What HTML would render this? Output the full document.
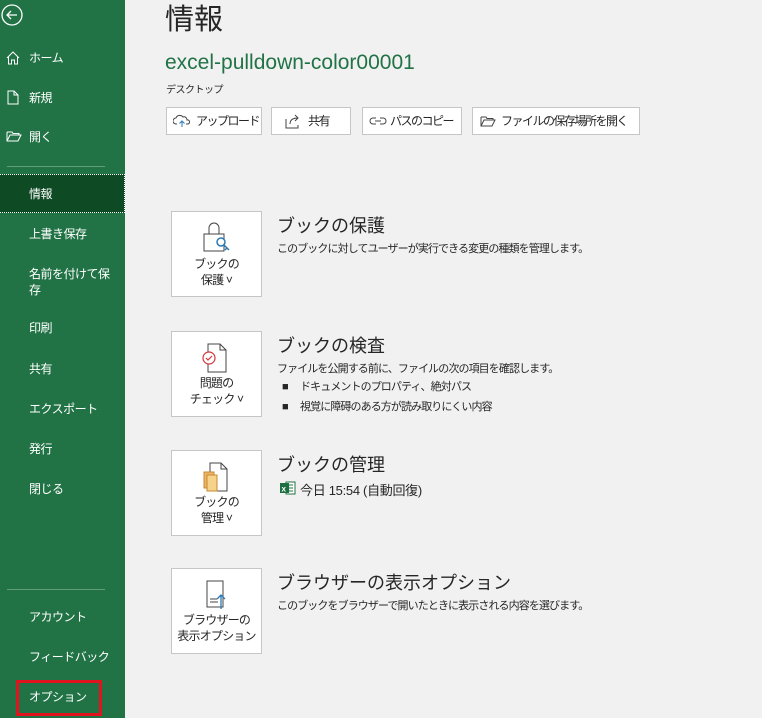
<!DOCTYPE html><html><head><meta charset="utf-8"><style>
*{margin:0;padding:0;box-sizing:border-box}
body{width:762px;height:718px;overflow:hidden;background:#f1f1f1;font-family:"Liberation Sans","Noto Sans CJK JP",sans-serif;position:relative;color:#262626}
.sb{position:absolute;left:0;top:0;width:125px;height:718px;background:#217346}
.it{position:absolute;left:29px;color:#fff;font-size:12px;line-height:16px;letter-spacing:-0.5px}
.ic{position:absolute;left:6px}
.sep{position:absolute;left:7px;width:98px;height:1px;background:#5f9e78}
.a{position:absolute}
.btn{position:absolute;top:107px;height:28px;border:1px solid #c6c6c6;background:#fff;font-size:12px;line-height:26px;color:#262626;white-space:nowrap;letter-spacing:-1.5px}
.box{position:absolute;left:171px;width:91px;height:86px;border:1px solid #c6c6c6;background:#fff;font-size:12px;text-align:center;line-height:16px;letter-spacing:-0.8px;white-space:nowrap}
.h{position:absolute;left:277px;font-size:18px;color:#262626;white-space:nowrap}
.d{position:absolute;left:277px;font-size:11px;color:#262626;letter-spacing:-0.9px;white-space:nowrap}
</style></head><body>
<div class="sb">
<svg class="a" style="left:0;top:3px" width="24" height="24" viewBox="0 0 24 24"><circle cx="12" cy="12" r="10" fill="none" stroke="#fff" stroke-width="1.3"/><path d="M17 12H7M11 8l-4 4 4 4" fill="none" stroke="#fff" stroke-width="1.3"/></svg>
<svg class="ic" style="top:51px" width="14" height="14" viewBox="0 0 14 14"><path d="M1 7L7 1l6 6M2.5 5.5V13h3V9h3v4h3V5.5" fill="none" stroke="#fff"/></svg>
<div class="it" style="top:50px">ホーム</div>
<svg class="ic" style="top:90px" width="14" height="15" viewBox="0 0 14 15"><path d="M2 1h6l4 4v9H2z M8 1v4h4" fill="none" stroke="#fff"/></svg>
<div class="it" style="top:90px">新規</div>
<svg class="ic" style="top:130px" width="16" height="13" viewBox="0 0 16 13"><path d="M1 2h5l1 1.5h6V5M1 2v9h11l3-6H4L1 11" fill="none" stroke="#fff"/></svg>
<div class="it" style="top:129px">開く</div>
<div class="sep" style="top:166px"></div>
<div class="a" style="left:0;top:174px;width:125px;height:39px;background:#0e4a23;border:1px dotted #fff;border-left:none"></div>
<div class="it" style="top:186px">情報</div>
<div class="it" style="top:226px">上書き保存</div>
<div class="it" style="top:266px">名前を付けて保<br>存</div>
<div class="it" style="top:320px">印刷</div>
<div class="it" style="top:361px">共有</div>
<div class="it" style="top:401px">エクスポート</div>
<div class="it" style="top:441px">発行</div>
<div class="it" style="top:481px">閉じる</div>
<div class="sep" style="top:589px"></div>
<div class="it" style="top:609px">アカウント</div>
<div class="it" style="top:649px">フィードバック</div>
<div class="it" style="top:689px">オプション</div>
<div class="a" style="left:16px;top:680px;width:86px;height:36px;border:3px solid #e0141e"></div>
</div>
<div class="a" style="left:165px;top:-4px;font-size:29px;color:#262626">情報</div>
<div class="a" style="left:165px;top:51px;font-size:21px;color:#217346">excel-pulldown-color00001</div>
<div class="a" style="left:166px;top:81px;font-size:10px;letter-spacing:-0.5px">デスクトップ</div>
<div class="btn" style="left:166px;width:96px;padding-left:29px">アップロード<svg class="a" style="left:6px;top:6px" width="18" height="14" viewBox="0 0 18 14"><path d="M4 10H3a3 3 0 010-6 4 4 0 017-1 3 3 0 014 3 2 2 0 011 4h-2" fill="none" stroke="#444"/><path d="M9 13V7M6.5 9.5L9 7l2.5 2.5" fill="none" stroke="#2a7ab8"/></svg></div>
<div class="btn" style="left:271px;width:80px;padding-left:36px">共有<svg class="a" style="left:12px;top:5px" width="18" height="16" viewBox="0 0 18 16"><path d="M2 6v9h12v-3M6 11c0-5 4-6 8-6M11 2l3 3-3 3" fill="none" stroke="#444"/></svg></div>
<div class="btn" style="left:362px;width:100px;padding-left:27px">パスのコピー<svg class="a" style="left:6px;top:7px" width="18" height="12" viewBox="0 0 18 12"><path d="M7 3H4a3 3 0 000 6h3M11 3h3a3 3 0 010 6h-3M6 6h6" fill="none" stroke="#444"/></svg></div>
<div class="btn" style="left:472px;width:168px;padding-left:28px">ファイルの保存場所を開く<svg class="a" style="left:7px;top:7px" width="16" height="13" viewBox="0 0 16 13"><path d="M1 2h5l1 1.5h6V5M1 2v9h11l3-6H4L1 11" fill="none" stroke="#444"/></svg></div>

<div class="box" style="top:211px"><svg class="a" style="left:30px;top:8px" width="30" height="34" viewBox="0 0 30 34"><path d="M7 14V8a5 5 0 0110 0v6M2 14h20v17H2z" fill="none" stroke="#444"/><circle cx="19" cy="22" r="4" fill="#fff" stroke="#2a7ab8" stroke-width="1.5"/><path d="M22 25l5 5M25 28l-2 2" stroke="#2a7ab8" stroke-width="1.5"/></svg><div style="margin-top:44px">ブックの<br>保護 ˅</div></div>
<div class="h" style="top:212px">ブックの保護</div>
<div class="d" style="top:240px">このブックに対してユーザーが実行できる変更の種類を管理します。</div>

<div class="box" style="top:331px"><svg class="a" style="left:28px;top:10px" width="34" height="34" viewBox="0 0 34 34"><path d="M8 2h12l6 6v22H8z M20 2v6h6" fill="none" stroke="#444"/><circle cx="9" cy="16" r="6" fill="#fff" stroke="#d13438" stroke-width="1.2"/><path d="M6 16l2 2 4-4" fill="none" stroke="#d13438" stroke-width="1.2"/></svg><div style="margin-top:43px">問題の<br>チェック ˅</div></div>
<div class="h" style="top:332px">ブックの検査</div>
<div class="d" style="top:360px">ファイルを公開する前に、ファイルの次の項目を確認します。</div>
<div class="d" style="top:378px;left:282px">■　 ドキュメントのプロパティ、絶対パス</div>
<div class="d" style="top:398px;left:282px">■　 視覚に障碍のある方が読み取りにくい内容</div>

<div class="box" style="top:450px"><svg class="a" style="left:30px;top:10px" width="30" height="32" viewBox="0 0 30 32"><path d="M8 2h11l6 6v22H8z M19 2v6h6" fill="none" stroke="#444"/><rect x="2" y="11" width="10" height="16" fill="#ecb36b" stroke="#c7892f"/><rect x="5" y="14" width="10" height="16" fill="#f6d28b" stroke="#c7892f"/></svg><div style="margin-top:43px">ブックの<br>管理 ˅</div></div>
<div class="h" style="top:451px">ブックの管理</div>
<svg class="a" style="left:280px;top:481px" width="16" height="14" viewBox="0 0 16 14"><rect x="6" y="1" width="9" height="12" fill="#fff" stroke="#217346"/><path d="M9 4h4M9 7h4M9 10h4" stroke="#217346"/><rect x="0" y="2" width="9" height="10" fill="#1d6f42"/><text x="1.5" y="10.5" font-size="8" fill="#fff" font-family="Liberation Sans" font-weight="bold">x</text></svg>
<div class="a" style="left:300px;top:480px;font-size:13px;letter-spacing:-0.3px">今日 15:54 (自動回復)</div>

<div class="box" style="top:568px"><svg class="a" style="left:30px;top:10px" width="30" height="32" viewBox="0 0 30 32"><path d="M5 2h16v26H5z M8 20h7M8 23h8" fill="none" stroke="#444"/><path d="M19 30V16M15 20l4-4 4 4" fill="none" stroke="#2a7ab8" stroke-width="1.3"/></svg><div style="margin-top:43px">ブラウザーの<br>表示オプション</div></div>
<div class="h" style="top:569px">ブラウザーの表示オプション</div>
<div class="d" style="top:597px">このブックをブラウザーで開いたときに表示される内容を選びます。</div>
</body></html>
